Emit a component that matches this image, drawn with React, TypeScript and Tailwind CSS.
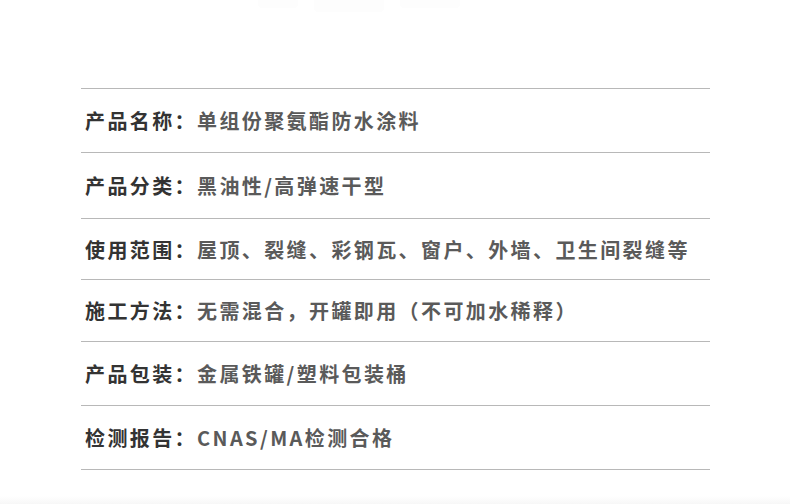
import React from "react";

const rows: { label: string; value: string; h: string }[] = [
  { label: "产品名称：", value: "单组份聚氨酯防水涂料", h: "h-[64px]" },
  { label: "产品分类：", value: "黑油性/高弹速干型", h: "h-[66px]" },
  { label: "使用范围：", value: "屋顶、裂缝、彩钢瓦、窗户、外墙、卫生间裂缝等", h: "h-[61px]" },
  { label: "施工方法：", value: "无需混合，开罐即用（不可加水稀释）", h: "h-[62px]" },
  { label: "产品包装：", value: "金属铁罐/塑料包装桶", h: "h-[64px]" },
  { label: "检测报告：", value: "CNAS/MA检测合格", h: "h-[65px]" },
];

export default function App() {
  return (
    <div
      className="relative w-[790px] h-[504px] bg-white overflow-hidden"
      style={{ fontFamily: '"Noto Sans CJK SC", "Noto Sans", sans-serif' }}
    >
      <div className="absolute left-[258px] top-0 w-[300px] h-[14px] flex gap-4">
        <div className="w-[40px] h-[8px] bg-[#fdfdfd] rounded-b" />
        <div className="w-[70px] h-[12px] bg-[#fdfdfd] rounded-b" />
        <div className="w-[60px] h-[8px] bg-[#fdfdfd] rounded-b" />
      </div>
      <div className="pt-[88px] pl-[81px] w-[710px]">
        {rows.map((r, i) => (
          <div
            key={i}
            className={`flex items-center pl-[4px] pt-[1px] border-t border-[#b8b8b8] ${r.h} ${
              i === rows.length - 1 ? "border-b" : ""
            } text-[20px] font-bold tracking-[2.4px] leading-none`}
          >
            <span className="text-[#333333]">{r.label}</span>
            <span className="text-[#5a5a5a]">{r.value}</span>
          </div>
        ))}
      </div>
      <div className="absolute left-0 bottom-0 w-full h-[8px] bg-gradient-to-b from-white to-[#f7f7f7]" />
    </div>
  );
}
